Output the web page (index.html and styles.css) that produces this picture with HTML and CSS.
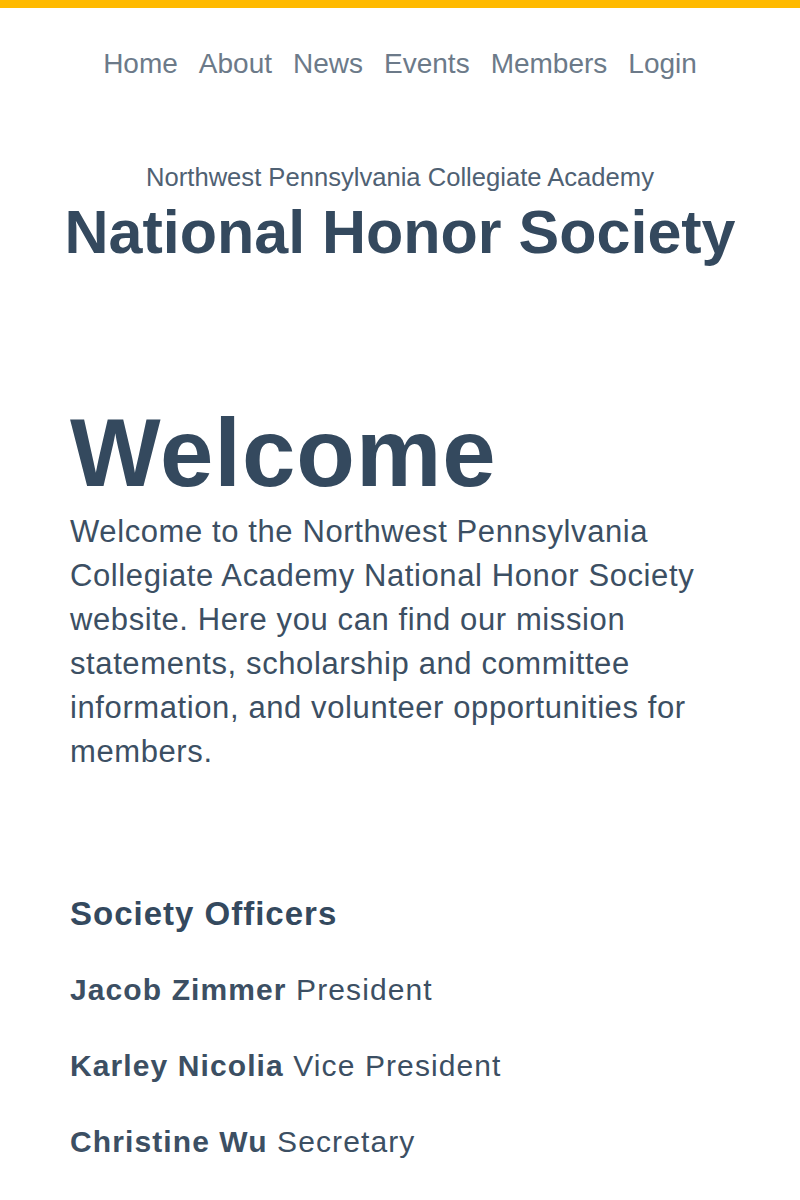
FILE: index.html
```html
<!DOCTYPE html>
<html>
<head>
<meta charset="utf-8">
<link rel="stylesheet" href="styles.css">
</head>
<body>
<div class="topbar"></div>
<nav class="nav">
  <a href="#">Home</a>
  <a href="#">About</a>
  <a href="#">News</a>
  <a href="#">Events</a>
  <a href="#">Members</a>
  <a href="#">Login</a>
</nav>
<header class="masthead">
  <div class="school">Northwest Pennsylvania Collegiate Academy</div>
  <h1 class="title">National Honor Society</h1>
</header>
<main class="content">
  <h2 class="welcome">Welcome</h2>
  <p class="intro">Welcome to the Northwest Pennsylvania Collegiate Academy National Honor Society website. Here you can find our mission statements, scholarship and committee information, and volunteer opportunities for members.</p>
  <h3 class="officers-title">Society Officers</h3>
  <p class="officer"><strong>Jacob Zimmer</strong> President</p>
  <p class="officer"><strong>Karley Nicolia</strong> Vice President</p>
  <p class="officer"><strong>Christine Wu</strong> Secretary</p>
</main>
</body>
</html>
```
FILE: styles.css
```css
html, body {
  margin: 0;
  padding: 0;
  background: #fff;
}
body {
  font-family: "Liberation Sans", Arial, sans-serif;
  color: #34495e;
}
.topbar {
  height: 8px;
  background: #ffba00;
}
.nav {
  display: flex;
  justify-content: center;
  gap: 21px;
  padding-top: 40px;
  font-size: 28px;
  line-height: 32px;
}
.nav a {
  color: #6c7a89;
  text-decoration: none;
}
.masthead {
  text-align: center;
  padding-top: 82px;
}
.school {
  font-size: 25.6px;
  line-height: 30px;
  color: #4f6173;
}
.title {
  margin: 0;
  font-size: 61px;
  line-height: 80px;
  font-weight: bold;
  color: #34495e;
}
.content {
  padding: 131px 70px 0 70px;
}
.welcome {
  margin: 0;
  font-size: 96px;
  line-height: 100px;
  font-weight: bold;
  letter-spacing: 1px;
}
.intro {
  margin: 7px 0 0 0;
  font-size: 31px;
  line-height: 44px;
  letter-spacing: 0.6px;
  color: #3c4f63;
}
.officers-title {
  margin: 120px 0 0 0;
  font-size: 33px;
  line-height: 40px;
  letter-spacing: 1px;
  font-weight: bold;
}
.officer {
  margin: 36px 0 0 0;
  font-size: 30px;
  line-height: 40px;
  letter-spacing: 1.1px;
  color: #3c4f63;
}
.officer strong {
  font-weight: bold;
}
```
